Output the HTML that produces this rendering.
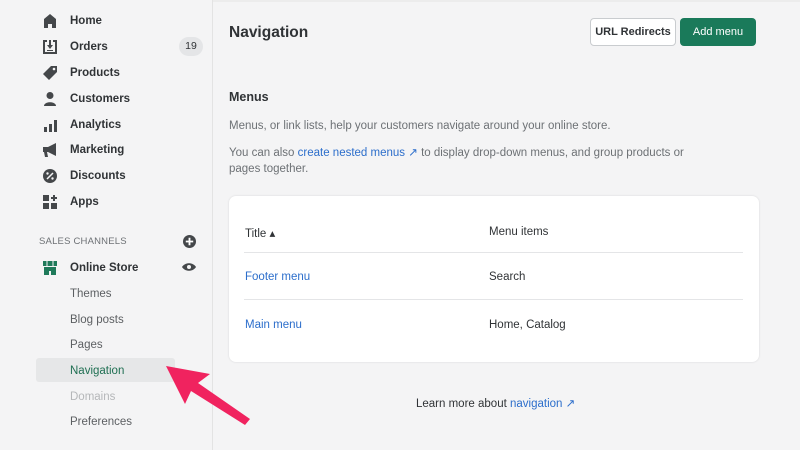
<!DOCTYPE html>
<html><head><style>
*{margin:0;padding:0;box-sizing:border-box}
body{width:800px;height:450px;overflow:hidden;background:#f4f4f5;font-family:"Liberation Sans",sans-serif;position:relative;color:#202223}
.side{position:absolute;left:0;top:0;width:213px;height:450px;background:#f4f4f5;border-right:1px solid #e3e3e3}
.it{position:absolute;left:70px;font-size:11.5px;font-weight:bold;color:#303336;margin-top:1px}
.sub{position:absolute;left:70px;font-size:11.5px;color:#5c5f62;margin-top:1px}
.ic{position:absolute;left:42px;width:16px;height:16px}
.a{position:absolute;font-size:11.5px;margin-top:1px}
.link{color:#2c6ecb}
</style></head><body>
<div style="position:absolute;left:0;top:0;width:800px;height:2px;background:#ececec"></div>
<div class="side">
<svg class="ic" style="top:13px" viewBox="0 0 16 16"><path d="M8 1L2 6v9h4v-4h4v4h4V6z" fill="#44474a"/></svg>
<div class="it" style="top:14px">Home</div>
<svg class="ic" style="top:39px" viewBox="0 0 16 16"><path d="M1 1h4v2H3v10h10V3h-2V1h4v14H1z M7 1h2v5h2l-3 4-3-4h2z M5 11h6v1H5z" fill="#44474a"/></svg>
<div class="it" style="top:40px">Orders</div>
<div style="position:absolute;left:179px;top:37px;width:24px;height:19px;border-radius:10px;background:#e4e5e7;font-size:10.5px;text-align:center;line-height:19px;color:#303336">19</div>
<svg class="ic" style="top:65px" viewBox="0 0 16 16"><path d="M9 1h6v6l-8 8-6-6z" fill="#44474a"/><circle cx="12" cy="4" r="1.3" fill="#f4f4f5"/></svg>
<div class="it" style="top:66px">Products</div>
<svg class="ic" style="top:91px" viewBox="0 0 16 16"><circle cx="8" cy="4.5" r="3.5" fill="#44474a"/><path d="M2 15c0-5 12-5 12 0z" fill="#44474a"/></svg>
<div class="it" style="top:92px">Customers</div>
<svg class="ic" style="top:117px" viewBox="0 0 16 16"><path d="M2 10h3v5H2zM7 7h3v8H7zM12 3h3v12h-3z" fill="#44474a"/></svg>
<div class="it" style="top:118px">Analytics</div>
<svg class="ic" style="top:142px" viewBox="0 0 16 16"><path d="M1 5h5l8-4v13l-8-4H5l1 5H3l-1-5H1z" fill="#44474a"/></svg>
<div class="it" style="top:143px">Marketing</div>
<svg class="ic" style="top:168px" viewBox="0 0 16 16"><circle cx="8" cy="8" r="7" fill="#44474a"/><path d="M5 11l6-6" stroke="#f4f4f5" stroke-width="1.5"/><circle cx="5.5" cy="5.5" r="1.2" fill="#f4f4f5"/><circle cx="10.5" cy="10.5" r="1.2" fill="#f4f4f5"/></svg>
<div class="it" style="top:169px">Discounts</div>
<svg class="ic" style="top:194px" viewBox="0 0 16 16"><path d="M1 1h6v6H1zM1 9h6v6H1zM9 9h6v6H9zM11 1h2v2h2v2h-2v2h-2V5H9V3h2z" fill="#44474a"/></svg>
<div class="it" style="top:195px">Apps</div>
<div style="position:absolute;left:39px;top:236px;font-size:9.5px;color:#6d7175;letter-spacing:.2px">SALES CHANNELS</div>
<svg style="position:absolute;left:183px;top:235px" width="13" height="13" viewBox="0 0 14 14"><circle cx="7" cy="7" r="7" fill="#44474a"/><path d="M7 3v8M3 7h8" stroke="#fff" stroke-width="2"/></svg>
<svg class="ic" style="top:260px" viewBox="0 0 16 16"><path d="M1 1h14v5H1zM2 7h12v8H9v-4H7v4H2z" fill="#1f7a5a"/><path d="M5 1v5M11 1v5" stroke="#f4f4f5" stroke-width="1"/></svg>
<div class="it" style="top:261px">Online Store</div>
<svg style="position:absolute;left:182px;top:262px" width="14" height="10" viewBox="0 0 14 10"><path d="M0 5C3 0 11 0 14 5C11 10 3 10 0 5z" fill="#44474a"/><circle cx="7" cy="5" r="2" fill="#f4f4f5"/></svg>
<div class="sub" style="top:287px">Themes</div>
<div class="sub" style="top:313px">Blog posts</div>
<div class="sub" style="top:338px">Pages</div>
<div style="position:absolute;left:36px;top:358px;width:139px;height:24px;background:#e6e7e8;border-radius:3px"></div>
<div class="sub" style="top:364px;color:#1f6f52">Navigation</div>
<div class="sub" style="top:390px;color:#b5b7b9">Domains</div>
<div class="sub" style="top:415px">Preferences</div>
</div>
<div style="position:absolute;left:229px;top:24px;font-size:15.5px;font-weight:bold;color:#303336">Navigation</div>
<div style="position:absolute;left:590px;top:18px;width:86px;height:28px;border:1px solid #c9cccf;background:#fff;border-radius:4px;font-size:11px;font-weight:bold;color:#303336;text-align:center;line-height:26px">URL Redirects</div>
<div style="position:absolute;left:680px;top:18px;width:76px;height:28px;background:#1a7a5a;border-radius:4px;font-size:11px;color:#fff;text-align:center;line-height:28px">Add menu</div>
<div style="position:absolute;left:229px;top:90px;font-size:12.5px;font-weight:bold;color:#303336">Menus</div>
<div class="a" style="left:229px;top:119px;color:#6d7175">Menus, or link lists, help your customers navigate around your online store.</div>
<div class="a" style="left:229px;top:144px;color:#6d7175;width:470px;line-height:16px">You can also <span class="link">create nested menus &#8599;</span> to display drop-down menus, and group products or pages together.</div>
<div style="position:absolute;left:229px;top:196px;width:530px;height:166px;background:#fff;border-radius:7px;box-shadow:0 0 2px rgba(0,0,0,.12)"></div>
<div class="a" style="left:245px;top:225px;color:#303336">Title &#9652;</div>
<div class="a" style="left:489px;top:225px;color:#303336">Menu items</div>
<div style="position:absolute;left:244px;top:252px;width:499px;height:1px;background:#e4e5e7"></div>
<div class="a link" style="left:245px;top:270px">Footer menu</div>
<div class="a" style="left:489px;top:270px;color:#303336">Search</div>
<div style="position:absolute;left:244px;top:299px;width:499px;height:1px;background:#e4e5e7"></div>
<div class="a link" style="left:245px;top:318px">Main menu</div>
<div class="a" style="left:489px;top:318px;color:#303336">Home, Catalog</div>
<div class="a" style="left:416px;top:395px;color:#303336">Learn more about <span class="link">navigation &#8599;</span></div>
<svg style="position:absolute;left:0;top:0" width="800" height="450"><polygon points="166,366 210,374 198,383 250,419 245,425 191,391 185,404" fill="#f0235f"/></svg>
</body></html>
